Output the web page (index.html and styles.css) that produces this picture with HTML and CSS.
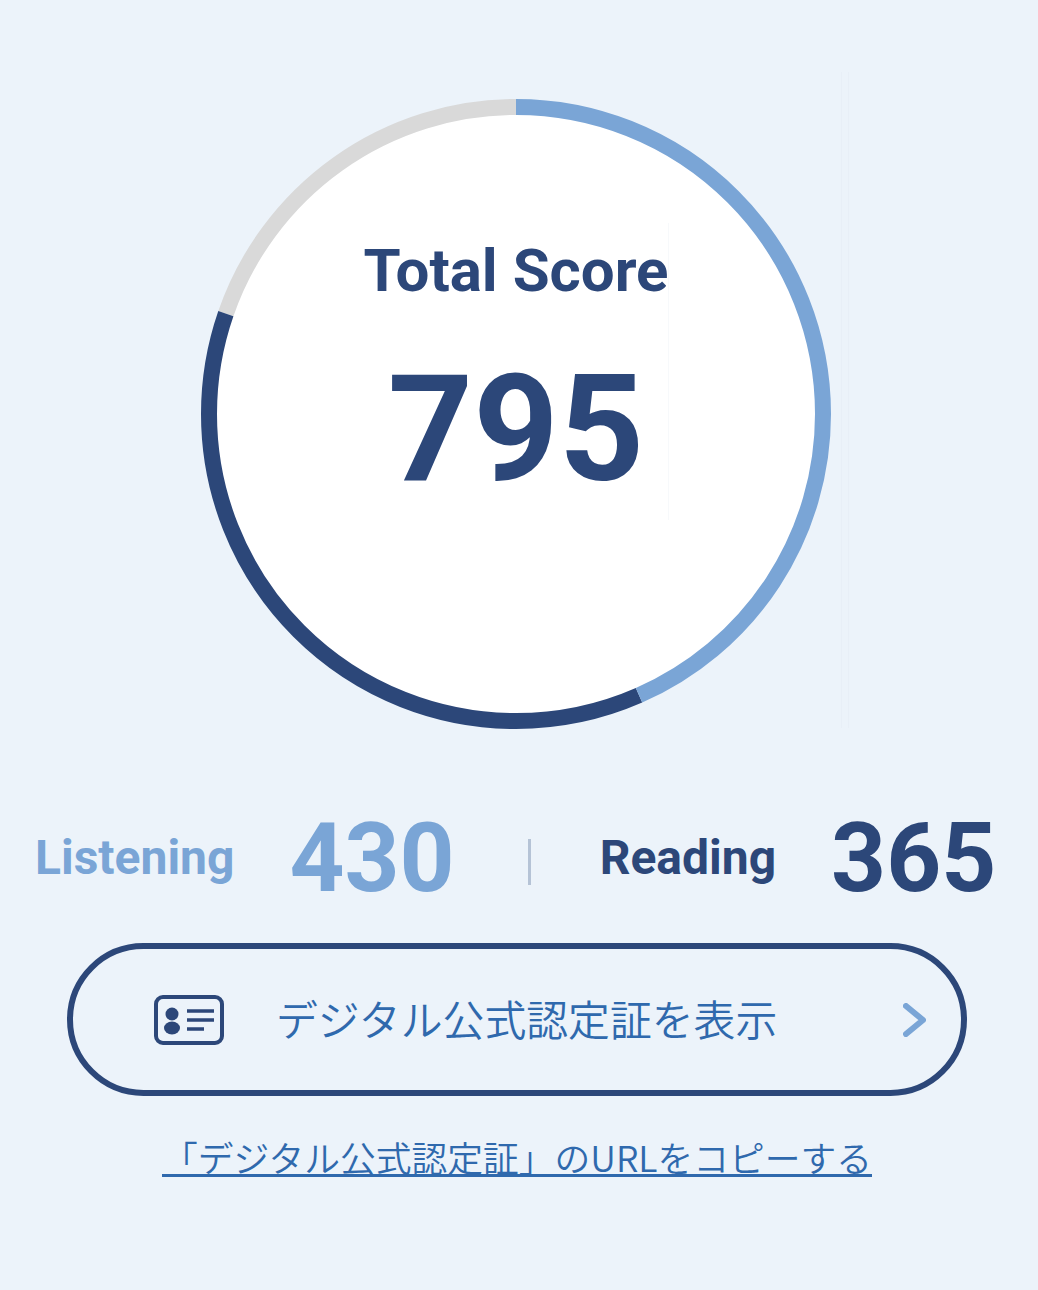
FILE: index.html
```html
<!DOCTYPE html>
<html lang="ja">
<head>
    <meta charset="UTF-8">
    <meta name="viewport" content="width=device-width, initial-scale=1.0">
    <title>Total Score</title>
    <link rel="stylesheet" href="styles.css">
</head>
<body>
    <div class="score-page">
        <div class="ring">
            <svg class="ring-chart" width="630" height="630" viewBox="0 0 630 630">
                <circle class="ring-face" cx="315" cy="315" r="300" />
                <circle class="ring-part ring-rest" cx="315" cy="315" r="307" pathLength="990" stroke-dasharray="195 990" stroke-dashoffset="-795" />
                <circle class="ring-part ring-dark" cx="315" cy="315" r="307" pathLength="990" stroke-dasharray="365 990" stroke-dashoffset="-430" />
                <circle class="ring-part ring-light" cx="315" cy="315" r="307" pathLength="990" stroke-dasharray="430 990" />
            </svg>
            <div class="ring-text">
                <div class="total-label">Total Score</div>
                <div class="total-value">795</div>
            </div>
        </div>

        <div class="parts">
            <div class="part part-listening">
                <span class="part-label">Listening</span>
                <span class="part-value">430</span>
            </div>
            <div class="parts-sep"></div>
            <div class="part part-reading">
                <span class="part-label">Reading</span>
                <span class="part-value">365</span>
            </div>
        </div>

        <a class="cert-button" href="#">
            <svg class="cert-icon" width="70" height="50" viewBox="0 0 70 50">
                <rect x="2" y="2" width="66" height="46" rx="7" fill="none" stroke="#2c4779" stroke-width="4" />
                <circle cx="18" cy="19" r="6.5" fill="#2c4779" />
                <ellipse cx="18" cy="33" rx="8" ry="6.5" fill="#2c4779" />
                <path d="M33 16H60M33 25H60M33 34H50" fill="none" stroke="#2c4779" stroke-width="3.3" />
            </svg>
            <span class="cert-text">デジタル公式認定証を表示</span>
            <svg class="cert-arrow" width="23" height="34" viewBox="0 0 23 34">
                <path d="M3 3L20 17L3 31" fill="none" stroke="#7aa5d6" stroke-width="6" stroke-linecap="round" stroke-linejoin="round" />
            </svg>
        </a>

        <a class="copy-link" href="#">「デジタル公式認定証」のURLをコピーする</a>
    </div>
</body>
</html>
```

FILE: styles.css
```css
* { margin: 0; padding: 0; box-sizing: border-box; }
body { background-color: #ecf3fa; font-family: Roboto, "Noto Sans CJK JP", sans-serif; }
.score-page { height: 1290px; padding-top: 99px; display: flex; flex-direction: column; align-items: center; overflow: hidden; }

/* Score ring */
.ring { position: relative; display: grid; width: 630px; height: 630px; margin-left: -6px; }
.ring-chart, .ring-text { grid-area: 1 / 1; }
.ring-chart { display: block; }
.ring-face { fill: #fff; }
.ring-part { fill: none; stroke-width: 16; transform: rotate(-90deg); transform-origin: 315px 315px; }
.ring-rest { stroke: #d9d9d9; }
.ring-dark { stroke: #2c4779; }
.ring-light { stroke: #7aa5d6; }
.ring-text { display: flex; flex-direction: column; align-items: center; padding-top: 137px; color: #2c4779; font-weight: 700; }
.total-label { font-size: 60px; line-height: 70px; }
.total-value { font-size: 149px; line-height: 160px; margin-top: 43px; }

/* faint seams over the ring */
.ring::before { content: ""; position: absolute; left: 467px; top: 124px; height: 297px; border-left: 1px solid #f7f9fb; }
.ring::after { content: ""; position: absolute; left: 640px; top: -27px; width: 6px; height: 656px; border-left: 1px solid #e8eff7; border-right: 1px solid #e8eff7; }

/* Listening / Reading */
.parts { width: 100%; display: flex; align-items: center; margin-top: 82px; height: 92px; padding-left: 35px; font-weight: 700; }
.part { display: flex; align-items: center; }
.part-label { font-size: 48px; }
.part-value { font-size: 96px; line-height: 92px; padding-top: 2px; }
.part-listening { color: #7aa5d6; gap: 55px; }
.part-reading { color: #2c4779; gap: 55px; }
.parts-sep { width: 3px; height: 46px; background-color: #b5c3d6; margin: 9px 69px 0 73px; }

/* Buttons */
.cert-button { width: 900px; height: 153px; margin: 40px 4px 0 0; display: flex; align-items: center; padding: 0 35px 0 81px; border: 6px solid #2c4779; border-radius: 77px; color: #2f69ad; text-decoration: none; }
.cert-text { font-size: 41.85px; font-weight: 350; margin: 0 0 4px 52px; flex: 1; }
.copy-link { margin: 44px 4px 0 0; font-family: "Noto Sans CJK JP", sans-serif; font-size: 35.75px; font-weight: 350; line-height: 34px; color: #2f69ad; text-decoration: none; border-bottom: 3px solid #2f69ad; }
```
